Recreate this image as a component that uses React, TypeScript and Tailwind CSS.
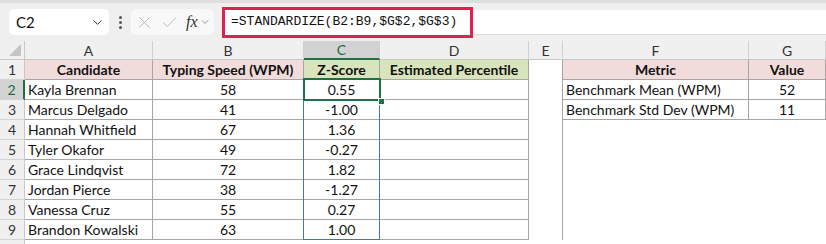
import { Check, ChevronDown, X } from "lucide-react";

const COLS = ["A", "B", "C", "D", "E", "F", "G"];

const candidates: [string, number, string][] = [
  ["Kayla Brennan", 58, "0.55"],
  ["Marcus Delgado", 41, "-1.00"],
  ["Hannah Whitfield", 67, "1.36"],
  ["Tyler Okafor", 49, "-0.27"],
  ["Grace Lindqvist", 72, "1.82"],
  ["Jordan Pierce", 38, "-1.27"],
  ["Vanessa Cruz", 55, "0.27"],
  ["Brandon Kowalski", 63, "1.00"],
];

const bench: [string, number][] = [
  ["Benchmark Mean (WPM)", 52],
  ["Benchmark Std Dev (WPM)", 11],
];

function RowHead({ n, active }: { n?: number; active?: boolean }) {
  return (
    <div
      className={
        "h-[20px] flex items-center justify-center text-[14px] border-b border-[#d4d4d4] " +
        (active
          ? "bg-[#d2d2d2] text-[#1e6b41] border-r-2 border-r-[#1e7145]"
          : "bg-[#f0f0f0] text-[#333] border-r border-r-[#c8c8c8]")
      }
    >
      {n}
    </div>
  );
}

export default function App() {
  return (
    <div className="w-[826px] h-[244px] overflow-hidden bg-white font-['Lato',sans-serif] text-[#111]">
      {/* formula bar */}
      <div className="h-[41px] bg-[#efefef] border-t-[3px] border-[#dedede] flex items-center">
        <div className="ml-[9px] w-[100px] h-[26px] rounded-[5px] bg-white flex items-center justify-between pl-[7px] pr-[4px] text-[15px]">
          <span>C2</span>
          <ChevronDown size={15} strokeWidth={1.6} className="text-[#333]" />
        </div>
        <div className="w-[22px] flex flex-col items-center gap-[2px]">
          <span className="w-[3px] h-[3px] bg-[#555] rounded-full" />
          <span className="w-[3px] h-[3px] bg-[#555] rounded-full" />
          <span className="w-[3px] h-[3px] bg-[#555] rounded-full" />
        </div>
        <div className="w-[83px] h-[26px] rounded-[5px] bg-[#f8f8f8] flex items-center pl-[4px] gap-[6px] text-[#b8b8b8]">
          <X size={19} strokeWidth={1.2} />
          <Check size={19} strokeWidth={1.2} />
          <span className="font-['Liberation_Serif',serif] italic text-[16px] text-[#333] ml-[1px]">fx</span>
          <ChevronDown size={12} strokeWidth={1.5} className="-ml-[5px] text-[#777]" />
        </div>
        <div className="ml-[8px] flex-1 flex items-center">
          <div className="w-[251px] h-[31px] border-[3px] border-[#e31e51] bg-white flex items-center pl-[6px] font-['Liberation_Mono',monospace] text-[13px] text-[#111]">
            =STANDARDIZE(B2:B9,$G$2,$G$3)
          </div>
          <div className="flex-1 h-[25px] bg-white border-b border-[#dadada]" />
        </div>
      </div>

      {/* sheet */}
      <div className="relative">
        <div className="grid grid-cols-[25px_128px_151px_76px_149px_34px_186px_77px]">
          {/* column headers */}
          <div className="h-[19px] bg-[#f0f0f0] border-r border-b border-[#c8c8c8] relative">
            <svg width="12" height="12" className="absolute right-[3px] bottom-[3px]">
              <polygon points="12,0 12,12 0,12" fill="#c4c4c4" />
            </svg>
          </div>
          {COLS.map((c) => (
            <div
              key={c}
              className={
                "h-[19px] flex items-center justify-center text-[14px] border-r border-[#d0d0d0] " +
                (c === "C"
                  ? "bg-[#d2d2d2] text-[#1e6b41] border-b-2 border-b-[#1e7145]"
                  : "bg-[#f0f0f0] text-[#333] border-b border-b-[#c8c8c8]")
              }
            >
              {c}
            </div>
          ))}

          {/* row 1 */}
          <RowHead n={1} />
          <div className="h-[20px] bg-[#f2dcdb] border-r border-b border-[#a6a6a6] flex items-center justify-center font-bold text-[14px]">Candidate</div>
          <div className="h-[20px] bg-[#f2dcdb] border-r border-b border-[#a6a6a6] flex items-center justify-center font-bold text-[14px]">Typing Speed (WPM)</div>
          <div className="h-[20px] bg-[#d8e4bc] border-r border-b border-[#a6a6a6] flex items-center justify-center font-bold text-[14px]">Z-Score</div>
          <div className="h-[20px] bg-[#d8e4bc] border-r border-b border-[#a6a6a6] flex items-center justify-center font-bold text-[14px]">Estimated Percentile</div>
          <div className="h-[20px] border-r border-[#a6a6a6]" />
          <div className="h-[20px] bg-[#f2dcdb] border-r border-b border-[#a6a6a6] flex items-center justify-center font-bold text-[14px]">Metric</div>
          <div className="h-[20px] bg-[#f2dcdb] border-r border-b border-[#a6a6a6] flex items-center justify-center font-bold text-[14px]">Value</div>

          {candidates.map(([name, wpm, z], i) => (
            <div key={name} className="contents">
              <RowHead n={i + 2} active={i === 0} />
              <div className="h-[20px] border-r border-b border-[#a6a6a6] flex items-center pl-[3px] text-[14px]">{name}</div>
              <div className="h-[20px] border-r border-b border-[#a6a6a6] flex items-center justify-center text-[14px]">{wpm}</div>
              <div className="h-[20px] border-r border-b border-[#a6a6a6] flex items-center justify-center text-[14px]">{z}</div>
              <div className="h-[20px] border-r border-b border-[#a6a6a6]" />
              <div className="h-[20px] border-r border-[#a6a6a6]" />
              {i < 2 ? (
                <>
                  <div className="h-[20px] border-r border-b border-[#a6a6a6] flex items-center pl-[3px] text-[14px]">{bench[i][0]}</div>
                  <div className="h-[20px] border-r border-b border-[#a6a6a6] flex items-center justify-center text-[14px]">{bench[i][1]}</div>
                </>
              ) : (
                <>
                  <div className="h-[20px]" />
                  <div className="h-[20px]" />
                </>
              )}
            </div>
          ))}
          <RowHead />
        </div>

        {/* selection overlays */}
        <div className="absolute left-[303px] top-[38px] w-[77px] h-[161px] border border-[#3f74c9] pointer-events-none" />
        <div className="absolute left-[303px] top-[37px] w-[78px] h-[23px] border-2 border-[#1e7145] pointer-events-none" />
        <div className="absolute left-[378px] top-[57px] w-[5px] h-[5px] bg-[#1e7145] border border-white box-content pointer-events-none" />
      </div>
    </div>
  );
}
